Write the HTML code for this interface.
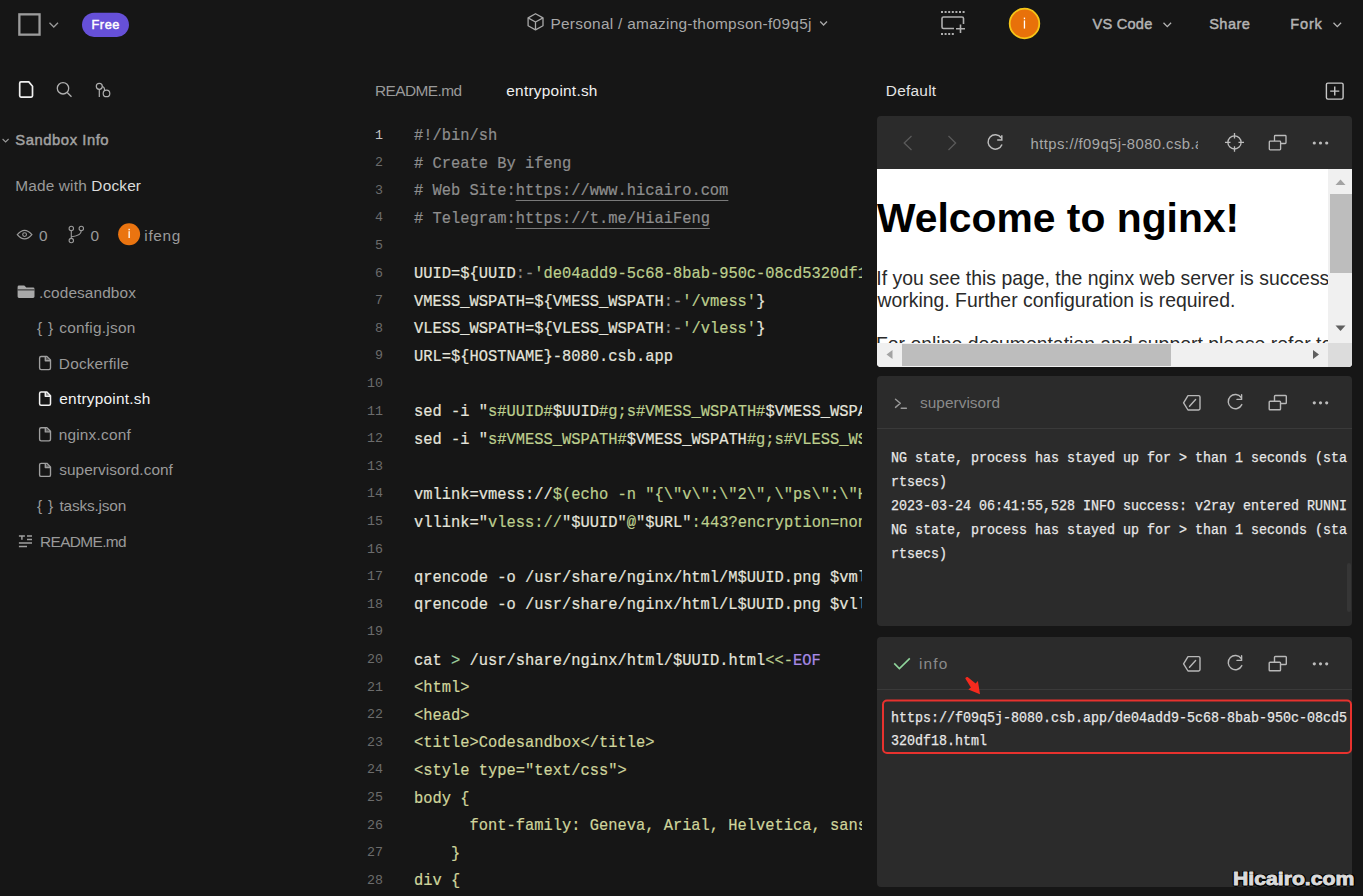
<!DOCTYPE html>
<html><head><meta charset="utf-8">
<style>
*{margin:0;padding:0;box-sizing:border-box}
html,body{width:1363px;height:896px;overflow:hidden;background:#161616;font-family:"Liberation Sans",sans-serif;color:#aaa}
.a{position:absolute;white-space:nowrap;line-height:1}
svg{position:absolute;overflow:visible}
.code{position:absolute;left:340px;top:0;width:522px;height:896px;overflow:hidden}
.ln{position:absolute;left:0;width:43px;text-align:right;font-family:"Liberation Mono",monospace;line-height:1}
.cl{position:absolute;left:74px;font-family:"Liberation Mono",monospace;line-height:1;white-space:pre}
.cl span{-webkit-text-stroke:0.2px currentColor}
.u{color:#8e8e8e;text-decoration:underline;text-underline-offset:4.5px;text-decoration-color:#7a7a7a}
.card{position:absolute;left:877px;width:475px;background:#2b2b2b;border-radius:4px;overflow:hidden}
.ic{fill:none;stroke:#b8b8b8;stroke-width:1.4;stroke-linecap:round;stroke-linejoin:round}
</style></head><body>

<!-- cards -->
<div class="card" style="top:116px;height:251px">
  <div style="position:absolute;left:0;top:53px;width:475px;height:198px;background:#fff;overflow:hidden">
    <div class="a" style="left:0.00px;top:29.19px;font-size:40.83px;font-weight:bold;color:#000;font-family:'Liberation Sans',sans-serif;">Welcome to nginx!</div>
<div class="a" style="left:-0.75px;top:99.69px;font-size:19.42px;color:#2a2a2a;font-family:'Liberation Sans',sans-serif;">If you see this page, the nginx web server is successfully installed and</div>
<div class="a" style="left:0.50px;top:122.11px;font-size:19.40px;color:#2a2a2a;font-family:'Liberation Sans',sans-serif;">working. Further configuration is required.</div>
<div class="a" style="left:-1.05px;top:166.49px;font-size:19.42px;color:#2a2a2a;font-family:'Liberation Sans',sans-serif;">For online documentation and support please refer to</div>
    <div style="position:absolute;left:451px;top:0;width:24px;height:174px;background:#f0f0f0"></div>
    <div style="position:absolute;left:453px;top:25px;width:22px;height:79px;background:#bdbdbd"></div>
    <div style="position:absolute;left:0;top:174px;width:475px;height:24px;background:#f0f0f0"></div>
    <div style="position:absolute;left:25px;top:175px;width:269px;height:22px;background:#bdbdbd"></div>
    <div style="position:absolute;left:451px;top:174px;width:24px;height:24px;background:#dcdcdc"></div>
  </div>
</div>
<div class="card" style="top:376px;height:250px">
  <div style="position:absolute;left:0;top:52px;width:475px;height:1px;background:#3a3a3a"></div>
  <div style="position:absolute;left:470px;top:187px;width:4px;height:49px;background:#363636;border-radius:2px"></div>
</div>
<div class="card" style="top:637px;height:250px">
  <div style="position:absolute;left:0;top:52px;width:475px;height:1px;background:#3a3a3a"></div>
</div>

<svg style="left:0;top:0" width="1363" height="896">
  <!-- top bar -->
  <rect x="19.35" y="14.35" width="20.2" height="20.3" fill="none" stroke="#9c9c9c" stroke-width="2.3"/>
  <path d="M49.5 22.8 L53.8 27 L58 22.8" fill="none" stroke="#9a9a9a" stroke-width="1.3"/>
  <rect x="82" y="12.7" width="47" height="24.2" rx="12.1" fill="#6650d8"/>
  <g fill="none" stroke="#a8a8a8" stroke-width="1.3" stroke-linejoin="round">
    <path d="M535.5 13.7 L543 17.9 L543 25.8 L535.5 29.9 L528.1 25.8 L528.1 17.9 Z"/>
    <path d="M528.1 17.9 L535.5 22 L543 17.9 M535.5 22 L535.5 29.9"/>
  </g>
  <path d="M820.2 21.5 L823.6 25 L827 21.5" fill="none" stroke="#a8a8a8" stroke-width="1.3"/>
  <g fill="#b0b0b0">
    <rect x="941" y="11" width="2" height="2"/><rect x="944.6" y="11" width="2" height="2"/><rect x="948.2" y="11" width="2" height="2"/><rect x="951.8" y="11" width="2" height="2"/><rect x="955.4" y="11" width="2" height="2"/><rect x="959" y="11" width="2" height="2"/><rect x="962.6" y="11" width="2" height="2"/>
    <rect x="941" y="33" width="2" height="2"/><rect x="944.6" y="33" width="2" height="2"/><rect x="948.2" y="33" width="2" height="2"/><rect x="951.8" y="33" width="2" height="2"/>
  </g>
  <path d="M954 28.5 H943.5 Q942 28.5 942 27 V18.5 Q942 17 943.5 17 H962 Q963.5 17 963.5 18.5 V24" fill="none" stroke="#b0b0b0" stroke-width="1.6"/>
  <path d="M956 28.8 H965 M960.5 24.5 V33" fill="none" stroke="#b0b0b0" stroke-width="1.6"/>
  <circle cx="1024.5" cy="23.5" r="14.8" fill="#e8710a" stroke="#f5c518" stroke-width="1.8"/>
  <rect x="1023.8" y="20.4" width="1.3" height="8.2" fill="#fff"/>
  <rect x="1023.8" y="17.6" width="1.3" height="1.6" fill="#fff"/>
  <path d="M1163.5 22.7 L1167.3 26.6 L1171.1 22.7" fill="none" stroke="#b4b4b4" stroke-width="1.3"/>
  <path d="M1333.5 22.7 L1337.3 26.6 L1341.1 22.7" fill="none" stroke="#b4b4b4" stroke-width="1.3"/>

  <!-- sidebar icons -->
  <path d="M21 81.9 H28.8 L32.5 86.2 V95.8 Q32.5 97.1 31.2 97.1 H21 Q19.7 97.1 19.7 95.8 V83.2 Q19.7 81.9 21 81.9 Z" fill="none" stroke="#efefef" stroke-width="1.7" stroke-linejoin="round"/>
  <circle cx="63" cy="88.3" r="5.7" fill="none" stroke="#b0b0b0" stroke-width="1.3"/>
  <path d="M67.2 92.5 L71.5 96.8" stroke="#b0b0b0" stroke-width="1.3"/>
  <circle cx="99.3" cy="86.3" r="3" fill="none" stroke="#b0b0b0" stroke-width="1.2"/>
  <circle cx="106.5" cy="93.4" r="3.3" fill="none" stroke="#b0b0b0" stroke-width="1.2"/>
  <path d="M99.3 89.3 V97 M102.3 86.5 Q104.5 86.8 104.6 90.5" fill="none" stroke="#b0b0b0" stroke-width="1.2"/>
  <path d="M2.6 139 L5.6 142 L8.6 139" fill="none" stroke="#999" stroke-width="1.1"/>
  <!-- eye -->
  <path d="M17.3 234.6 Q24.6 226 31.9 234.6 Q24.6 243.2 17.3 234.6 Z" fill="none" stroke="#9a9a9a" stroke-width="1.2"/>
  <circle cx="24.6" cy="234.6" r="1.9" fill="none" stroke="#9a9a9a" stroke-width="1.1"/>
  <!-- branch -->
  <circle cx="71.3" cy="228.4" r="2.2" fill="none" stroke="#9a9a9a" stroke-width="1.1"/>
  <circle cx="81.3" cy="228.4" r="2.2" fill="none" stroke="#9a9a9a" stroke-width="1.1"/>
  <circle cx="71.3" cy="240.6" r="2.2" fill="none" stroke="#9a9a9a" stroke-width="1.1"/>
  <path d="M71.3 230.6 V238.4 M81.3 230.6 Q81.3 235.6 71.8 236.8" fill="none" stroke="#9a9a9a" stroke-width="1.1"/>
  <circle cx="129.1" cy="234.2" r="11" fill="#ea7410"/>
  <rect x="128.5" y="231.2" width="1.3" height="6.8" fill="#fff"/>
  <rect x="128.5" y="228.8" width="1.3" height="1.5" fill="#fff"/>
  <!-- folder -->
  <path d="M17.6 287 Q17.6 285.6 19 285.6 H24.3 L26.3 287.6 H33.1 Q34.5 287.6 34.5 289 V296.6 Q34.5 298 33.1 298 H19 Q17.6 298 17.6 296.6 Z" fill="#a9a9a9"/>
  <path d="M17.6 289.9 H34.5" stroke="#161616" stroke-width="0.9"/>
  <!-- file icons -->
  <path d="M41.1 356.5 H46.9 L50.5 360.1 V368.1 Q50.5 369.6 49 369.6 H41.1 Q39.6 369.6 39.6 368.1 V358.0 Q39.6 356.5 41.1 356.5 Z M45.3 356.5 V360.7 H50.5" fill="none" stroke="#a0a0a0" stroke-width="1.35" stroke-linejoin="round"/><path d="M45.9 357.1 L49.9 360.2 H45.9 Z" fill="#a0a0a0" fill-opacity="0.55"/>
  <path d="M41.1 427.7 H46.9 L50.5 431.3 V439.3 Q50.5 440.8 49 440.8 H41.1 Q39.6 440.8 39.6 439.3 V429.2 Q39.6 427.7 41.1 427.7 Z M45.3 427.7 V431.9 H50.5" fill="none" stroke="#a0a0a0" stroke-width="1.35" stroke-linejoin="round"/><path d="M45.9 428.3 L49.9 431.4 H45.9 Z" fill="#a0a0a0" fill-opacity="0.55"/>
  <path d="M41.1 463.3 H46.9 L50.5 466.9 V474.9 Q50.5 476.4 49 476.4 H41.1 Q39.6 476.4 39.6 474.9 V464.8 Q39.6 463.3 41.1 463.3 Z M45.3 463.3 V467.5 H50.5" fill="none" stroke="#a0a0a0" stroke-width="1.35" stroke-linejoin="round"/><path d="M45.9 463.9 L49.9 467.0 H45.9 Z" fill="#a0a0a0" fill-opacity="0.55"/>
  <path d="M41.1 392.1 H46.9 L50.5 395.7 V403.7 Q50.5 405.2 49 405.2 H41.1 Q39.6 405.2 39.6 403.7 V393.6 Q39.6 392.1 41.1 392.1 Z M45.3 392.1 V396.3 H50.5" fill="none" stroke="#f2f2f2" stroke-width="1.5" stroke-linejoin="round"/><path d="M45.9 392.7 L49.9 395.8 H45.9 Z" fill="#f2f2f2" fill-opacity="0.55"/>
  <!-- readme icon -->
  <path d="M18.9 536 H24.9 M21.9 536 V539.8 M27 536 H32 M27 539.6 H32 M18.9 543 H32 M18.9 546.6 H27" stroke="#a0a0a0" stroke-width="1.5"/>

  <!-- right header plus -->
  <rect x="1326.4" y="83.1" width="16.7" height="16" rx="1.5" fill="none" stroke="#c8c8c8" stroke-width="1.4"/>
  <path d="M1334.75 86.6 V95.6 M1330.2 91.1 H1339.3" stroke="#c8c8c8" stroke-width="1.4"/>

  <!-- preview toolbar -->
  <path d="M911.5 136 L904.2 143 L911.5 150" fill="none" stroke="#5a5a5a" stroke-width="1.3"/>
  <path d="M948.5 136 L955.6 143 L948.5 150" fill="none" stroke="#5a5a5a" stroke-width="1.3"/>
  <path d="M1001.2 137.8 A7.2 7.2 0 1 0 1002 144.5" fill="none" stroke="#bcbcbc" stroke-width="1.5"/>
  <path d="M1001.8 135.3 V139.9 H997.2" fill="none" stroke="#bcbcbc" stroke-width="1.5"/>
  <circle cx="1234.5" cy="142.4" r="6.6" fill="none" stroke="#bcbcbc" stroke-width="1.3"/>
  <path d="M1234.5 133 V138.5 M1234.5 146.3 V151.8 M1225 142.4 H1230.5 M1238.5 142.4 H1244" stroke="#bcbcbc" stroke-width="1.3"/>
  <path d="M1274.5 141 V136.3 Q1274.5 135.5 1275.3 135.5 H1285.2 Q1286 135.5 1286 136.3 V142.7 Q1286 143.5 1285.2 143.5 H1280.6" fill="none" stroke="#bcbcbc" stroke-width="1.3"/>
  <rect x="1269.3" y="141.2" width="11.3" height="8.6" rx="0.8" fill="none" stroke="#bcbcbc" stroke-width="1.3"/>
  <circle cx="1314.3" cy="143" r="1.6" fill="#bcbcbc"/><circle cx="1320.5" cy="143" r="1.6" fill="#bcbcbc"/><circle cx="1326.7" cy="143" r="1.6" fill="#bcbcbc"/>
  <path d="M1335.5 185 L1340.5 179.5 L1345.5 185 Z" fill="#a3a3a3"/>
  <path d="M1335.5 325.5 L1340.5 331 L1345.5 325.5 Z" fill="#5f5f5f"/>
  <path d="M892.5 350 L886.5 354.5 L892.5 359 Z" fill="#a3a3a3"/>
  <path d="M1313 350 L1319 354.5 L1313 359 Z" fill="#5f5f5f"/>

  <!-- supervisord header icons -->
  <g class="ic">
    <path d="M895.5 399.2 L900.3 403.3 L895.5 407.4 M901.2 408.2 H906.4" stroke="#9a9a9a"/>
  </g>
  <g class="ic">
    <path d="M1188 395.6 H1198.6 Q1200 395.6 1200 397 V408.6 Q1200 410 1198.6 410 H1188 L1183.6 402.8 Z M1189.5 406.3 L1195.6 399.5"/>
    <path d="M1241.2 397.6 A7.1 7.1 0 1 0 1241.8 404.6 M1241.6 394.8 V399.4 H1237"/>
    <path d="M1274.5 401 V396.3 Q1274.5 395.5 1275.3 395.5 H1285.5 Q1286.3 395.5 1286.3 396.3 V402.7 Q1286.3 403.5 1285.5 403.5 H1280.6"/>
    <rect x="1269.2" y="401.2" width="11.3" height="8.6" rx="0.8"/>
  </g>
  <circle cx="1314.3" cy="402.8" r="1.6" fill="#bcbcbc"/><circle cx="1320.5" cy="402.8" r="1.6" fill="#bcbcbc"/><circle cx="1326.7" cy="402.8" r="1.6" fill="#bcbcbc"/>
  <g transform="translate(0,261)" class="ic">
    <path d="M1188 395.6 H1198.6 Q1200 395.6 1200 397 V408.6 Q1200 410 1198.6 410 H1188 L1183.6 402.8 Z M1189.5 406.3 L1195.6 399.5"/>
    <path d="M1241.2 397.6 A7.1 7.1 0 1 0 1241.8 404.6 M1241.6 394.8 V399.4 H1237"/>
    <path d="M1274.5 401 V396.3 Q1274.5 395.5 1275.3 395.5 H1285.5 Q1286.3 395.5 1286.3 396.3 V402.7 Q1286.3 403.5 1285.5 403.5 H1280.6"/>
    <rect x="1269.2" y="401.2" width="11.3" height="8.6" rx="0.8"/>
  </g>
  <circle cx="1314.3" cy="663.8" r="1.6" fill="#bcbcbc"/><circle cx="1320.5" cy="663.8" r="1.6" fill="#bcbcbc"/><circle cx="1326.7" cy="663.8" r="1.6" fill="#bcbcbc"/>
  <path d="M894.2 663.4 L899.4 668.6 L909.8 658.4" fill="none" stroke="#8fd49b" stroke-width="1.6"/>
  <!-- red box + arrow -->
  <rect x="883" y="700.5" width="468" height="52.5" rx="4" fill="none" stroke="#e8322e" stroke-width="2"/>
  <path d="M965.3 678.6 Q965.6 676.6 967.6 677 L975.6 683.6 L977.9 681 L980 694.2 L968.3 689.6 L970.9 687.6 Z" fill="#f52a1e"/>
</svg>

<div class="a" style="left:91.38px;top:18.82px;font-size:12.80px;-webkit-text-stroke:0.45px #ffffff;letter-spacing:0.599px;color:#ffffff;font-family:'Liberation Sans',sans-serif;">Free</div>
<div class="a" style="left:550.47px;top:15.91px;font-size:15.40px;letter-spacing:0.285px;color:#a8a8a8;font-family:'Liberation Sans',sans-serif;">Personal / amazing-thompson-f09q5j</div>
<div class="a" style="left:1092.43px;top:17.49px;font-size:14.60px;-webkit-text-stroke:0.45px #b4b4b4;letter-spacing:0.238px;color:#b4b4b4;font-family:'Liberation Sans',sans-serif;">VS Code</div>
<div class="a" style="left:1209.14px;top:17.49px;font-size:14.60px;-webkit-text-stroke:0.45px #b4b4b4;letter-spacing:0.451px;color:#b4b4b4;font-family:'Liberation Sans',sans-serif;">Share</div>
<div class="a" style="left:1290.23px;top:17.49px;font-size:14.60px;-webkit-text-stroke:0.45px #b4b4b4;letter-spacing:0.823px;color:#b4b4b4;font-family:'Liberation Sans',sans-serif;">Fork</div>
<div class="a" style="left:15.33px;top:132.92px;font-size:14.80px;-webkit-text-stroke:0.45px #a2a2a2;letter-spacing:0.547px;color:#a2a2a2;font-family:'Liberation Sans',sans-serif;">Sandbox Info</div>
<div class="a" style="left:15.17px;top:178.31px;font-size:15.40px;letter-spacing:0.178px;color:#9a9a9a;font-family:'Liberation Sans',sans-serif;">Made with <span style="color:#dcdcdc">Docker</span></div>
<div class="a" style="left:38.98px;top:228.01px;font-size:15.40px;letter-spacing:0.000px;color:#9a9a9a;font-family:'Liberation Sans',sans-serif;">0</div>
<div class="a" style="left:90.38px;top:228.01px;font-size:15.40px;letter-spacing:0.000px;color:#9a9a9a;font-family:'Liberation Sans',sans-serif;">0</div>
<div class="a" style="left:144.30px;top:228.01px;font-size:15.40px;letter-spacing:0.665px;color:#9a9a9a;font-family:'Liberation Sans',sans-serif;">ifeng</div>
<div class="a" style="left:38.91px;top:284.51px;font-size:15.40px;letter-spacing:0.098px;color:#9a9a9a;font-family:'Liberation Sans',sans-serif;">.codesandbox</div>
<div class="a" style="left:59.28px;top:319.91px;font-size:15.40px;letter-spacing:0.250px;color:#9a9a9a;font-family:'Liberation Sans',sans-serif;">config.json</div>
<div class="a" style="left:58.87px;top:355.51px;font-size:15.40px;letter-spacing:0.175px;color:#9a9a9a;font-family:'Liberation Sans',sans-serif;">Dockerfile</div>
<div class="a" style="left:59.28px;top:391.11px;font-size:15.40px;letter-spacing:0.246px;color:#f2f2f2;font-family:'Liberation Sans',sans-serif;">entrypoint.sh</div>
<div class="a" style="left:58.70px;top:426.71px;font-size:15.40px;letter-spacing:0.209px;color:#9a9a9a;font-family:'Liberation Sans',sans-serif;">nginx.conf</div>
<div class="a" style="left:59.24px;top:462.31px;font-size:15.40px;letter-spacing:0.048px;color:#9a9a9a;font-family:'Liberation Sans',sans-serif;">supervisord.conf</div>
<div class="a" style="left:59.47px;top:497.91px;font-size:15.40px;letter-spacing:-0.180px;color:#9a9a9a;font-family:'Liberation Sans',sans-serif;">tasks.json</div>
<div class="a" style="left:40.07px;top:533.51px;font-size:15.40px;letter-spacing:-0.627px;color:#9a9a9a;font-family:'Liberation Sans',sans-serif;">README.md</div>
<div class="a" style="left:37.07px;top:319.51px;font-size:15.40px;letter-spacing:0.793px;color:#9a9a9a;font-family:'Liberation Sans',sans-serif;">{ }</div>
<div class="a" style="left:37.07px;top:497.51px;font-size:15.40px;letter-spacing:0.793px;color:#9a9a9a;font-family:'Liberation Sans',sans-serif;">{ }</div>
<div class="a" style="left:374.97px;top:82.91px;font-size:15.40px;letter-spacing:-0.552px;color:#9a9a9a;font-family:'Liberation Sans',sans-serif;">README.md</div>
<div class="a" style="left:506.28px;top:82.51px;font-size:15.40px;letter-spacing:0.254px;color:#f0f0f0;font-family:'Liberation Sans',sans-serif;">entrypoint.sh</div>
<div class="a" style="left:885.77px;top:82.71px;font-size:15.40px;letter-spacing:0.261px;color:#e4e4e4;font-family:'Liberation Sans',sans-serif;">Default</div>
<div class="a" style="left:919.94px;top:394.91px;font-size:15.40px;letter-spacing:0.045px;color:#8a8a8a;font-family:'Liberation Sans',sans-serif;">supervisord</div>
<div class="a" style="left:919.00px;top:655.91px;font-size:15.40px;letter-spacing:1.141px;color:#8a8a8a;font-family:'Liberation Sans',sans-serif;">info</div>
<div class="code">
<div class="ln" style="top:128.69px;font-size:13.3px;color:#c4c4c4">1</div>
<div class="cl" style="top:128.14px;font-size:16.400px;transform:scaleX(0.9400);transform-origin:0 0"><span style="color:#8e8e8e">#!/bin/sh</span></div>
<div class="ln" style="top:156.29px;font-size:13.3px;color:#6c6c6c">2</div>
<div class="cl" style="top:155.74px;font-size:16.400px;transform:scaleX(0.9400);transform-origin:0 0"><span style="color:#8e8e8e"># Create By ifeng</span></div>
<div class="ln" style="top:183.89px;font-size:13.3px;color:#6c6c6c">3</div>
<div class="cl" style="top:183.34px;font-size:16.400px;transform:scaleX(0.9400);transform-origin:0 0"><span style="color:#8e8e8e"># Web Site:</span><span class="u">https://www.hicairo.com</span></div>
<div class="ln" style="top:211.49px;font-size:13.3px;color:#6c6c6c">4</div>
<div class="cl" style="top:210.94px;font-size:16.400px;transform:scaleX(0.9400);transform-origin:0 0"><span style="color:#8e8e8e"># Telegram:</span><span class="u">https://t.me/HiaiFeng</span></div>
<div class="ln" style="top:239.09px;font-size:13.3px;color:#6c6c6c">5</div>
<div class="ln" style="top:266.69px;font-size:13.3px;color:#6c6c6c">6</div>
<div class="cl" style="top:266.14px;font-size:16.400px;transform:scaleX(0.9400);transform-origin:0 0"><span style="color:#e4e4dc">UUID=${UUID</span><span style="color:#8e8e8e">:-</span><span style="color:#bdcf8e">&#x27;de04add9-5c68-8bab-950c-08cd5320df18&#x27;}</span></div>
<div class="ln" style="top:294.29px;font-size:13.3px;color:#6c6c6c">7</div>
<div class="cl" style="top:293.74px;font-size:16.400px;transform:scaleX(0.9400);transform-origin:0 0"><span style="color:#e4e4dc">VMESS_WSPATH=${VMESS_WSPATH</span><span style="color:#8e8e8e">:-</span><span style="color:#bdcf8e">&#x27;/vmess&#x27;</span><span style="color:#e4e4dc">}</span></div>
<div class="ln" style="top:321.89px;font-size:13.3px;color:#6c6c6c">8</div>
<div class="cl" style="top:321.34px;font-size:16.400px;transform:scaleX(0.9400);transform-origin:0 0"><span style="color:#e4e4dc">VLESS_WSPATH=${VLESS_WSPATH</span><span style="color:#8e8e8e">:-</span><span style="color:#bdcf8e">&#x27;/vless&#x27;</span><span style="color:#e4e4dc">}</span></div>
<div class="ln" style="top:349.49px;font-size:13.3px;color:#6c6c6c">9</div>
<div class="cl" style="top:348.94px;font-size:16.400px;transform:scaleX(0.9400);transform-origin:0 0"><span style="color:#e4e4dc">URL=${HOSTNAME}-8080.csb.app</span></div>
<div class="ln" style="top:377.09px;font-size:13.3px;color:#6c6c6c">10</div>
<div class="ln" style="top:404.69px;font-size:13.3px;color:#6c6c6c">11</div>
<div class="cl" style="top:404.14px;font-size:16.400px;transform:scaleX(0.9400);transform-origin:0 0"><span style="color:#e4e4dc">sed -i &quot;</span><span style="color:#bdcf8e">s#UUID#</span><span style="color:#e4e4dc">$UUID</span><span style="color:#bdcf8e">#g;s#VMESS_WSPATH#</span><span style="color:#e4e4dc">$VMESS_WSPATH</span></div>
<div class="ln" style="top:432.29px;font-size:13.3px;color:#6c6c6c">12</div>
<div class="cl" style="top:431.74px;font-size:16.400px;transform:scaleX(0.9400);transform-origin:0 0"><span style="color:#e4e4dc">sed -i &quot;</span><span style="color:#bdcf8e">s#VMESS_WSPATH#</span><span style="color:#e4e4dc">$VMESS_WSPATH</span><span style="color:#bdcf8e">#g;s#VLESS_WSPATH</span></div>
<div class="ln" style="top:459.89px;font-size:13.3px;color:#6c6c6c">13</div>
<div class="ln" style="top:487.49px;font-size:13.3px;color:#6c6c6c">14</div>
<div class="cl" style="top:486.94px;font-size:16.400px;transform:scaleX(0.9400);transform-origin:0 0"><span style="color:#e4e4dc">vmlink=vmess://</span><span style="color:#bdcf8e">$(echo -n &quot;{\&quot;v\&quot;:\&quot;2\&quot;,\&quot;ps\&quot;:\&quot;Hi</span></div>
<div class="ln" style="top:515.09px;font-size:13.3px;color:#6c6c6c">15</div>
<div class="cl" style="top:514.54px;font-size:16.400px;transform:scaleX(0.9400);transform-origin:0 0"><span style="color:#e4e4dc">vllink=&quot;</span><span style="color:#bdcf8e">vless://</span><span style="color:#e4e4dc">&quot;$UUID&quot;</span><span style="color:#bdcf8e">@</span><span style="color:#e4e4dc">&quot;$URL&quot;</span><span style="color:#bdcf8e">:443?encryption=none</span></div>
<div class="ln" style="top:542.69px;font-size:13.3px;color:#6c6c6c">16</div>
<div class="ln" style="top:570.29px;font-size:13.3px;color:#6c6c6c">17</div>
<div class="cl" style="top:569.74px;font-size:16.400px;transform:scaleX(0.9400);transform-origin:0 0"><span style="color:#e4e4dc">qrencode -o /usr/share/nginx/html/M$UUID.png $vmlink</span></div>
<div class="ln" style="top:597.89px;font-size:13.3px;color:#6c6c6c">18</div>
<div class="cl" style="top:597.34px;font-size:16.400px;transform:scaleX(0.9400);transform-origin:0 0"><span style="color:#e4e4dc">qrencode -o /usr/share/nginx/html/L$UUID.png $vllink</span></div>
<div class="ln" style="top:625.49px;font-size:13.3px;color:#6c6c6c">19</div>
<div class="ln" style="top:653.09px;font-size:13.3px;color:#6c6c6c">20</div>
<div class="cl" style="top:652.54px;font-size:16.400px;transform:scaleX(0.9400);transform-origin:0 0"><span style="color:#e4e4dc">cat </span><span style="color:#9fd0a0">&gt;</span><span style="color:#e4e4dc"> /usr/share/nginx/html/$UUID.html</span><span style="color:#bdcf8e">&lt;&lt;-</span><span style="color:#a88be6">EOF</span></div>
<div class="ln" style="top:680.69px;font-size:13.3px;color:#6c6c6c">21</div>
<div class="cl" style="top:680.14px;font-size:16.400px;transform:scaleX(0.9400);transform-origin:0 0"><span style="color:#cfd59c">&lt;html&gt;</span></div>
<div class="ln" style="top:708.29px;font-size:13.3px;color:#6c6c6c">22</div>
<div class="cl" style="top:707.74px;font-size:16.400px;transform:scaleX(0.9400);transform-origin:0 0"><span style="color:#cfd59c">&lt;head&gt;</span></div>
<div class="ln" style="top:735.89px;font-size:13.3px;color:#6c6c6c">23</div>
<div class="cl" style="top:735.34px;font-size:16.400px;transform:scaleX(0.9400);transform-origin:0 0"><span style="color:#cfd59c">&lt;title&gt;Codesandbox&lt;/title&gt;</span></div>
<div class="ln" style="top:763.49px;font-size:13.3px;color:#6c6c6c">24</div>
<div class="cl" style="top:762.94px;font-size:16.400px;transform:scaleX(0.9400);transform-origin:0 0"><span style="color:#cfd59c">&lt;style type=&quot;text/css&quot;&gt;</span></div>
<div class="ln" style="top:791.09px;font-size:13.3px;color:#6c6c6c">25</div>
<div class="cl" style="top:790.54px;font-size:16.400px;transform:scaleX(0.9400);transform-origin:0 0"><span style="color:#cfd59c">body {</span></div>
<div class="ln" style="top:818.69px;font-size:13.3px;color:#6c6c6c">26</div>
<div class="cl" style="top:818.14px;font-size:16.400px;transform:scaleX(0.9400);transform-origin:0 0"><span style="color:#cfd59c">      font-family: Geneva, Arial, Helvetica, sans-serif;</span></div>
<div class="ln" style="top:846.29px;font-size:13.3px;color:#6c6c6c">27</div>
<div class="cl" style="top:845.74px;font-size:16.400px;transform:scaleX(0.9400);transform-origin:0 0"><span style="color:#cfd59c">    }</span></div>
<div class="ln" style="top:873.89px;font-size:13.3px;color:#6c6c6c">28</div>
<div class="cl" style="top:873.34px;font-size:16.400px;transform:scaleX(0.9400);transform-origin:0 0"><span style="color:#cfd59c">div {</span></div>
</div>
<div class="a" style="left:890.6px;top:450.88px;font-family:'Liberation Mono',monospace;font-size:14.5px;color:#e8e8e8;-webkit-text-stroke:0.25px #e8e8e8;transform:scaleX(0.9195);transform-origin:0 0">NG state, process has stayed up for &gt; than 1 seconds (sta</div>
<div class="a" style="left:890.6px;top:474.88px;font-family:'Liberation Mono',monospace;font-size:14.5px;color:#e8e8e8;-webkit-text-stroke:0.25px #e8e8e8;transform:scaleX(0.9195);transform-origin:0 0">rtsecs)</div>
<div class="a" style="left:890.6px;top:498.88px;font-family:'Liberation Mono',monospace;font-size:14.5px;color:#e8e8e8;-webkit-text-stroke:0.25px #e8e8e8;transform:scaleX(0.9195);transform-origin:0 0">2023-03-24 06:41:55,528 INFO success: v2ray entered RUNNI</div>
<div class="a" style="left:890.6px;top:522.88px;font-family:'Liberation Mono',monospace;font-size:14.5px;color:#e8e8e8;-webkit-text-stroke:0.25px #e8e8e8;transform:scaleX(0.9195);transform-origin:0 0">NG state, process has stayed up for &gt; than 1 seconds (sta</div>
<div class="a" style="left:890.6px;top:546.88px;font-family:'Liberation Mono',monospace;font-size:14.5px;color:#e8e8e8;-webkit-text-stroke:0.25px #e8e8e8;transform:scaleX(0.9195);transform-origin:0 0">rtsecs)</div>
<div class="a" style="left:891px;top:710.58px;font-family:'Liberation Mono',monospace;font-size:14.5px;color:#e8e8e8;-webkit-text-stroke:0.25px #e8e8e8;transform:scaleX(0.9195);transform-origin:0 0">https://f09q5j-8080.csb.app/de04add9-5c68-8bab-950c-08cd5</div>
<div class="a" style="left:891px;top:734.48px;font-family:'Liberation Mono',monospace;font-size:14.5px;color:#e8e8e8;-webkit-text-stroke:0.25px #e8e8e8;transform:scaleX(0.9195);transform-origin:0 0">320df18.html</div>
<div style="position:absolute;left:1031px;top:128px;width:167px;height:30px;overflow:hidden"><div class="a" style="left:-0.44px;top:9.22px;font-size:14.80px;letter-spacing:0.442px;color:#a8a8a8;font-family:'Liberation Sans',sans-serif;">https://f09q5j-8080.csb.app</div></div>
<div class="a" style="left:1232.5px;top:868.6px;font-size:19px;font-weight:bold;color:#dadada;-webkit-text-stroke:0.9px #dadada;transform:scaleX(1.115);transform-origin:0 0;text-shadow:-1.3px -1.3px 0 #000,1.3px -1.3px 0 #000,-1.3px 1.3px 0 #000,1.3px 1.3px 0 #000,0 1.5px 1px #000,1.5px 0 1px #000">Hicairo.com</div>
</body></html>
